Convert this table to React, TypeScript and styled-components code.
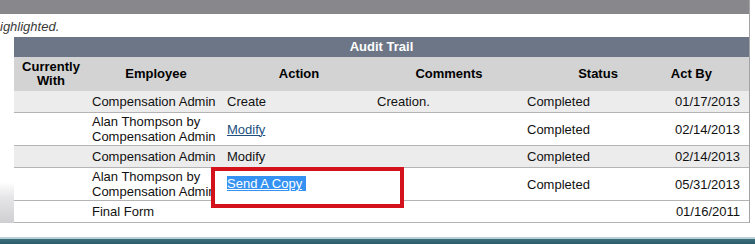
import { createGlobalStyle, styled } from "styled-components";

const GlobalStyle = createGlobalStyle`
  html, body {
    margin: 0;
    padding: 0;
    background: #ffffff;
  }
  body {
    width: 755px;
    height: 244px;
    overflow: hidden;
    font-family: "Liberation Sans", Arial, sans-serif;
    font-size: 13px;
    color: #111111;
  }
`;

const COLUMNS = "74px 136px 150px 150px 148px 76px";

type Entry = {
  employee: string[];
  action: string;
  link?: boolean;
  comment?: string;
  status?: string;
  date: string;
  shaded?: boolean;
  marked?: boolean;
};

const entries: Entry[] = [
  { employee: ["Compensation Admin"], action: "Create", comment: "Creation.", status: "Completed", date: "01/17/2013", shaded: true },
  { employee: ["Alan Thompson by", "Compensation Admin"], action: "Modify", link: true, status: "Completed", date: "02/14/2013" },
  { employee: ["Compensation Admin"], action: "Modify", status: "Completed", date: "02/14/2013", shaded: true },
  { employee: ["Alan Thompson by", "Compensation Admin"], action: "Send A Copy", link: true, status: "Completed", date: "05/31/2013", marked: true },
  { employee: ["Final Form"], action: "", date: "01/16/2011" },
];

const Page = styled.div`
  display: flex;
  flex-direction: column;
  width: 755px;
  height: 244px;
`;

const Dialog = styled.div`
  width: 750px;
  box-sizing: border-box;
  border-right: 1px solid #a3a3a7;
  display: flex;
  flex-direction: column;
`;

const GreyBar = styled.div`
  height: 14px;
  background: #88888c;
`;

const Note = styled.div`
  height: 23px;
  line-height: 25px;
  font-style: italic;
  color: #3a3a3a;
`;

const Body = styled.div`
  display: flex;
`;

const Gutter = styled.div`
  width: 14px;
  flex: none;
  background: linear-gradient(
    to bottom,
    #ffffff 0%,
    #ffffff 78%,
    #e6e6e8 86%,
    #cfcfd3 100%
  );
`;

const Table = styled.div`
  width: 735px;
  border-bottom: 1px solid #b2b2b2;
`;

const Title = styled.div`
  height: 20px;
  line-height: 20px;
  background: #6c7686;
  color: #ffffff;
  font-weight: bold;
  text-align: center;
`;

const HeadRow = styled.div`
  display: grid;
  grid-template-columns: ${COLUMNS};
  height: 34px;
  background: #d3d3d3;
`;

const HeadCell = styled.div<{ $right?: boolean }>`
  display: flex;
  align-items: center;
  justify-content: ${(p) => (p.$right ? "flex-end" : "center")};
  padding-right: ${(p) => (p.$right ? "36px" : "0")};
  text-align: center;
  font-weight: bold;
  line-height: 14px;
  white-space: nowrap;
  color: #000000;
`;

const Row = styled.div<{ $shaded?: boolean }>`
  display: grid;
  grid-template-columns: ${COLUMNS};
  min-height: 21px;
  background: ${(p) => (p.$shaded ? "#ececec" : "#ffffff")};
  border-bottom: 1px solid #b4b4b4;
  &:last-child {
    border-bottom: none;
  }
`;

const Cell = styled.div<{ $right?: boolean; $pad?: number }>`
  position: relative;
  display: flex;
  flex-direction: column;
  justify-content: center;
  align-items: ${(p) => (p.$right ? "flex-end" : "flex-start")};
  padding: 1px ${(p) => (p.$right ? "8px" : "0")} 1px ${(p) => p.$pad ?? 3}px;
  line-height: 15px;
  white-space: nowrap;
`;

const ActionLink = styled.a`
  color: #21507f;
  text-decoration: underline;
  cursor: pointer;
`;

const Callout = styled.div`
  position: absolute;
  left: -13px;
  top: -1px;
  width: 193px;
  height: 41px;
  box-sizing: border-box;
  border: 4px solid #d3121b;
  background: #ffffff;
  padding: 5px 0 0 12px;
  line-height: 15px;
`;

const Selected = styled.span`
  background: #3592f2;
  color: #ffffff;
  text-decoration: underline;
  padding-right: 4px;
`;

const Gap = styled.div`
  height: 14px;
`;

const Footer = styled.div`
  flex: 1;
  border-top: 2px solid #b9d0d6;
  background: linear-gradient(to bottom, #3c6f7c, #2c5c6a);
`;

const ActionCell = ({ entry }: { entry: Entry }) => {
  if (entry.marked) {
    return (
      <Cell>
        <Callout>
          <Selected>{entry.action}</Selected>
        </Callout>
      </Cell>
    );
  }
  return (
    <Cell>
      {entry.link ? <ActionLink>{entry.action}</ActionLink> : entry.action}
    </Cell>
  );
};

export default function App() {
  return (
    <>
      <GlobalStyle />
      <Page>
        <Dialog>
          <GreyBar />
          <Note>ighlighted.</Note>
          <Body>
            <Gutter />
            <Table>
              <Title>Audit Trail</Title>
              <HeadRow>
                <HeadCell>
                  Currently
                  <br />
                  With
                </HeadCell>
                <HeadCell>Employee</HeadCell>
                <HeadCell>Action</HeadCell>
                <HeadCell>Comments</HeadCell>
                <HeadCell>Status</HeadCell>
                <HeadCell $right>Act By</HeadCell>
              </HeadRow>
              {entries.map((entry, i) => (
                <Row key={i} $shaded={entry.shaded}>
                  <Cell />
                  <Cell $pad={4}>
                    {entry.employee.map((line) => (
                      <span key={line}>{line}</span>
                    ))}
                  </Cell>
                  <ActionCell entry={entry} />
                  <Cell>{entry.comment}</Cell>
                  <Cell>{entry.status}</Cell>
                  <Cell $right>{entry.date}</Cell>
                </Row>
              ))}
            </Table>
          </Body>
        </Dialog>
        <Gap />
        <Footer />
      </Page>
    </>
  );
}
